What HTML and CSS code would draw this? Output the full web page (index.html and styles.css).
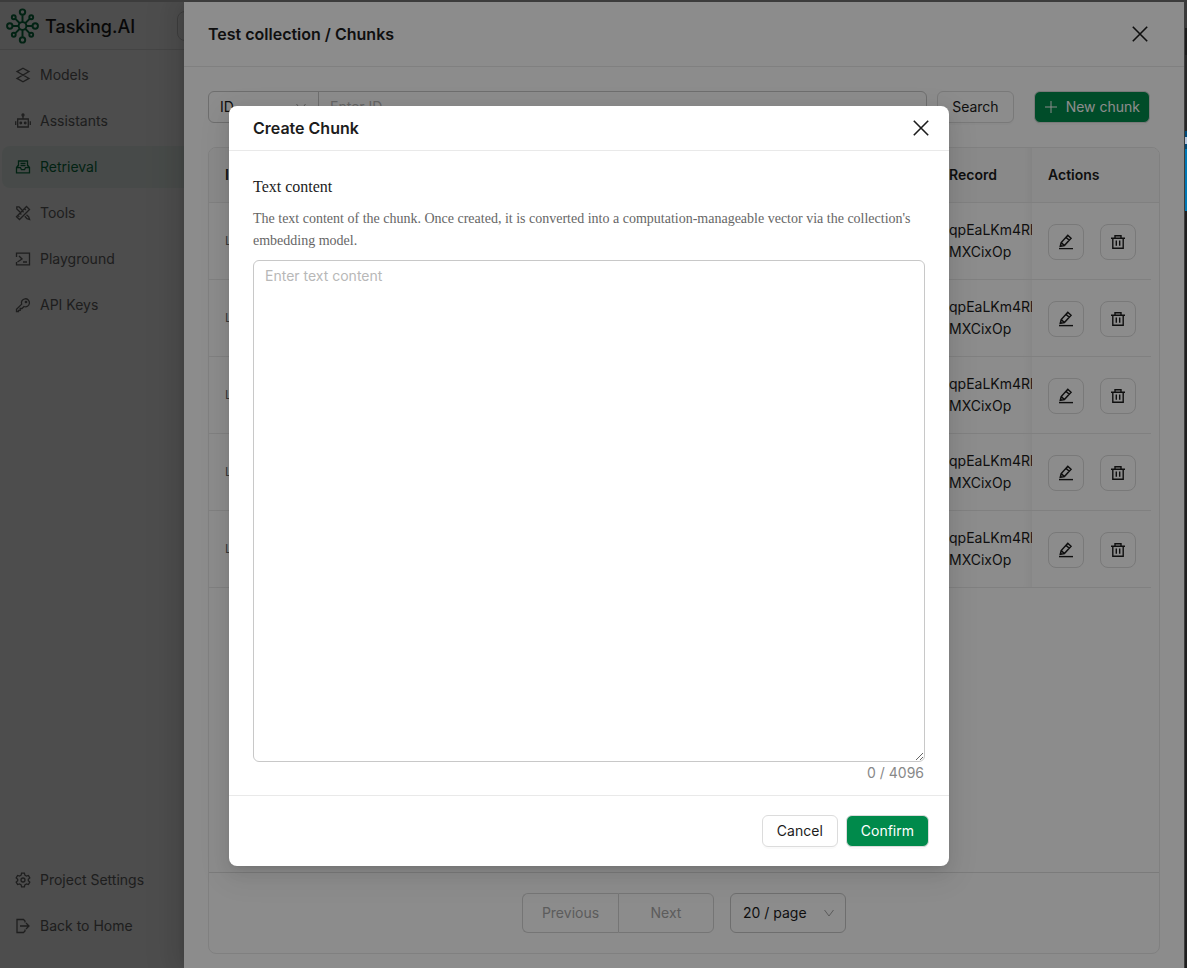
FILE: index.html
```html
<!DOCTYPE html>
<html lang="en">
<head>
<meta charset="utf-8">
<title>Tasking.AI</title>
<link rel="stylesheet" href="styles.css">
</head>
<body>
<svg class="sprite" aria-hidden="true">
  <symbol id="edit" viewBox="0 0 16 16"><path d="M1 14.600h14" stroke-width="1.400"/><path d="M2.300 12.300l.9-3.700 6.600-7.300 3.200 2.900-6.600 7.300z M3.200 8.600l3.200 2.900 M8 3.300l3.200 2.900" stroke-width="1.500"/></symbol>
  <symbol id="trash" viewBox="0 0 16 16"><path d="M1 4.200h14M2.800 4.200v10h10.400v-10M5 4V1.800h6V4M6.300 6.500v5.200M9.700 6.500v5.200" stroke-width="1.400"/></symbol>
  <symbol id="close" viewBox="0 0 16 16"><path d="M.8.8l14.400 14.400M15.200.8L.8 15.200" stroke-width="1.600"/></symbol>
  <symbol id="chevron" viewBox="0 0 12 12"><path d="M1.500 3L6 9l4.500-6"/></symbol>
</svg>
<div class="window">
  <div class="app">
    <header class="topbar">
      <svg class="logo" viewBox="0 0 34 36"><path d="M17 14V7M17 22v7M13 18H6M21 18h7M14.200 15.200l-4.500-4.500M19.800 15.200l4.500-4.500M14.200 20.800l-4.500 4.500M19.800 20.800l4.500 4.500"/><circle cx="17" cy="18" r="4"/><circle cx="17" cy="3.700" r="2.800"/><circle cx="17" cy="32.300" r="2.800"/><circle cx="3.900" cy="18" r="2.800"/><circle cx="30.100" cy="18" r="2.800"/><circle cx="8" cy="9" r="2"/><circle cx="26" cy="9" r="2"/><circle cx="8" cy="27" r="2"/><circle cx="26" cy="27" r="2"/></svg>
      <span class="brand">Tasking.AI</span>
      <span class="project"></span>
    </header>
    <nav class="sidebar">
      <a class="item" href="#"><svg viewBox="0 0 16 16"><path d="M8 1.200l6 3.400-6 3.400-6-3.400zM5 9.700l-3 1.700 6 3.400 6-3.400-3-1.700M2 4.600l0 .4 12 6.400M14 4.600l0 .4-12 6.400" stroke="none"/><path d="M8 1.200l6 3.400-6 3.400-6-3.400zM8 8l6 3.400-6 3.400-6-3.400z"/></svg>Models</a>
      <a class="item" href="#"><svg viewBox="0 0 16 16"><path d="M2.700 6h10.600v8H2.700zM8 6V3M.7 8.300v3.600M15.300 8.300v3.600"/><circle cx="8" cy="2" r="1"/><circle cx="5.800" cy="10" r=".8"/><circle cx="10.200" cy="10" r=".8"/></svg>Assistants</a>
      <a class="item active" href="#"><svg viewBox="0 0 16 16"><path d="M3.500 7.500V2h9v5.500M3.500 6L1.500 8.500v5.300h13V8.500L12.500 6M1.500 8.700h4l1 2h3l1-2h4M5.500 4.300h5M5.500 6.500h5"/></svg>Retrieval</a>
      <a class="item" href="#"><svg viewBox="0 0 16 16"><path d="M5 7L1.800 4V1.800H4L7 5M9.800 11.300l2.200 2.400 2.600.8-.9-2.600-2.200-2.200M1.500 11.700l10-10.200 3 3-10 10zM9.500 3.700l1.300 1.300M7.300 6l1.300 1.300M5.100 8.200l1.300 1.300M3 10.400l1.300 1.300"/></svg>Tools</a>
      <a class="item" href="#"><svg viewBox="0 0 16 16"><path d="M1.500 6V2.200h13v11.600h-13V11M4 5l3 3-4.500 3M8 11h4"/></svg>Playground</a>
      <a class="item" href="#"><svg viewBox="0 0 16 16"><path d="M6.700 7.200a4 4 0 1 1 2.300 2.300L7 11.500H5.200v1.800H3.500v1.200h-2v-2.300z"/><circle cx="11" cy="5" r=".7"/></svg>API Keys</a>
      <span class="spacer"></span>
      <a class="item" href="#"><svg viewBox="0 0 16 16"><path d="M6.600 1.200h2.800l.5 2 1.500.9 2-.6 1.400 2.400-1.500 1.400v1.400l1.500 1.400-1.400 2.400-2-.6-1.500.9-.5 2H6.600l-.5-2-1.500-.9-2 .6-1.400-2.400 1.500-1.400V7.300L1.200 5.900l1.400-2.400 2 .6 1.500-.9z"/><circle cx="8" cy="8" r="2"/></svg>Project Settings</a>
      <a class="item" href="#"><svg viewBox="0 0 16 16"><path d="M10 4.500V3L8.500 1.500H2v13h6.500L10 13v-1.500M5 8h9M11 5l3 3-3 3"/></svg>Back to Home</a>
    </nav>
  </div>
  <div class="mask"></div>

  <section class="drawer">
    <header class="drawer-head">
      <h2>Test collection / Chunks</h2>
      <button class="close" aria-label="Close drawer"><svg><use href="#close"/></svg></button>
    </header>
    <div class="drawer-body">
      <form class="filters">
        <div class="search">
          <button type="button" class="field" aria-label="Search field">ID<svg class="chev"><use href="#chevron"/></svg></button>
          <input type="text" placeholder="Enter ID" aria-label="ID">
        </div>
        <button type="button" class="btn">Search</button>
        <button type="button" class="btn primary new"><svg viewBox="0 0 14 14"><path d="M7 1v12M1 7h12"/></svg>New chunk</button>
      </form>
      <div class="panel">
        <table>
          <thead><tr><th class="id">ID</th><th class="rec">Record</th><th class="act">Actions</th></tr></thead>
          <tbody>
            <tr><td class="id">Lm</td><td class="rec"><div>qpEaLKm4Rh<br>MXCixOp</div></td><td class="act"><button aria-label="Edit"><svg><use href="#edit"/></svg></button><button aria-label="Delete"><svg><use href="#trash"/></svg></button></td></tr>
            <tr><td class="id">Lm</td><td class="rec"><div>qpEaLKm4Rh<br>MXCixOp</div></td><td class="act"><button aria-label="Edit"><svg><use href="#edit"/></svg></button><button aria-label="Delete"><svg><use href="#trash"/></svg></button></td></tr>
            <tr><td class="id">Lm</td><td class="rec"><div>qpEaLKm4Rh<br>MXCixOp</div></td><td class="act"><button aria-label="Edit"><svg><use href="#edit"/></svg></button><button aria-label="Delete"><svg><use href="#trash"/></svg></button></td></tr>
            <tr><td class="id">Lm</td><td class="rec"><div>qpEaLKm4Rh<br>MXCixOp</div></td><td class="act"><button aria-label="Edit"><svg><use href="#edit"/></svg></button><button aria-label="Delete"><svg><use href="#trash"/></svg></button></td></tr>
            <tr><td class="id">Lm</td><td class="rec"><div>qpEaLKm4Rh<br>MXCixOp</div></td><td class="act"><button aria-label="Edit"><svg><use href="#edit"/></svg></button><button aria-label="Delete"><svg><use href="#trash"/></svg></button></td></tr>
          </tbody>
        </table>
        <footer class="pager">
          <div class="pages"><button disabled>Previous</button><button disabled>Next</button></div>
          <div class="size">
            <select aria-label="Page size"><option>20 / page</option></select>
            <svg class="chev"><use href="#chevron"/></svg>
          </div>
        </footer>
      </div>
    </div>
  </section>

  <div class="mask dialog-layer">
    <section class="modal" role="dialog" aria-labelledby="modal-title">
      <header class="modal-head">
        <h2 id="modal-title">Create Chunk</h2>
        <button class="close" aria-label="Close dialog"><svg><use href="#close"/></svg></button>
      </header>
      <div class="modal-body">
        <label for="content">Text content</label>
        <p>The text content of the chunk. Once created, it is converted into a computation-manageable vector via the collection's embedding model.</p>
        <textarea id="content" placeholder="Enter text content"></textarea>
        <span class="count">0 / 4096</span>
      </div>
      <footer class="modal-foot">
        <button class="btn">Cancel</button>
        <button class="btn primary">Confirm</button>
      </footer>
    </section>
  </div>
</div>
</body>
</html>
```
FILE: styles.css
```css
* { box-sizing: border-box; }
body {
  margin: 0;
  background: linear-gradient(
    #3a3a3a 28px, #1c1c1c 28px 55px, #262626 55px 131px,
    #004a78 131px 137px, #b4c6dc 137px 144px, #004a78 144px 149px,
    #0078b4 149px 211px, #1e1e1e 211px) no-repeat #1e1e1e;
  font: 14px/22px Inter, "Liberation Sans", sans-serif;
  color: #1c1c1c;
}
h2, p { margin: 0; }
button, input, select, textarea { font: inherit; color: inherit; margin: 0; }
button { cursor: pointer; }
svg { fill: none; stroke: currentColor; flex: none; }
.sprite { position: absolute; width: 0; height: 0; }

.window {
  position: relative;
  height: 100vh;
  margin-right: 2px;
  overflow: hidden;
  border-top: 2px solid #3c3c3c;
  border-right: 1px solid #3c3c3c;
}
.app { height: 100%; background: #fff; display: flex; flex-direction: column; }
.mask { position: absolute; inset: 0; background: rgba(0, 0, 0, .45); }

.topbar {
  display: flex;
  align-items: center;
  height: 48px;
  padding-left: 6px;
  border-bottom: 1px solid #e4e4e4;
}
.logo { width: 33px; height: 36px; stroke: #087443; stroke-width: 2; }
.brand { width: 132px; padding: 2px 0 0 6px; font-size: 18px; font-weight: 500; }
.project { margin-left: 6px; width: 200px; height: 30px; border: 1px solid #d0d0d0; border-radius: 8px; }

.sidebar { flex: 1; width: 240px; padding: 4px 0 21px 2px; display: flex; flex-direction: column; gap: 4px; }
.item {
  display: flex;
  align-items: center;
  gap: 9px;
  height: 42px;
  padding-left: 13px;
  border-radius: 8px;
  color: #666;
  text-decoration: none;
}
.item svg { width: 16px; height: 16px; stroke-width: 1.3; }
.item.active { background: #edf8f3; color: #087443; }
.spacer { flex: 1; }

.drawer {
  position: absolute;
  inset: 0 0 0 184px;
  background: #fff;
  display: flex;
  flex-direction: column;
  box-shadow: -6px 0 16px rgba(0, 0, 0, .08), -3px 0 6px -4px rgba(0, 0, 0, .12), -9px 0 28px 8px rgba(0, 0, 0, .05);
}
.drawer-head {
  display: flex;
  align-items: center;
  justify-content: space-between;
  height: 65px;
  padding: 0 36px 0 24px;
  border-bottom: 1px solid #e9e9e9;
}
h2 { font-size: 16px; line-height: 24px; font-weight: 600; }
.close { display: flex; padding: 0; border: 0; background: none; }
.close svg { width: 16px; height: 16px; }
.drawer-body { flex: 1; display: flex; flex-direction: column; gap: 24px; padding: 24px 24px 14px; }

.filters { display: flex; padding-right: 10px; }
.search {
  flex: 1;
  display: flex;
  height: 32px;
  margin-right: 10px;
  border: 1px solid #c8c8c8;
  border-radius: 6px;
}
.field {
  display: flex;
  align-items: center;
  justify-content: space-between;
  width: 110px;
  padding: 0 11px;
  border: 0;
  border-right: 1px solid #c8c8c8;
  background: none;
}
.chev { width: 12px; height: 12px; color: #a6a6a6; }
.search input { flex: 1; min-width: 0; border: 0; background: none; padding: 0 11px; }
::placeholder { color: #b8b8b8; opacity: 1; }
.btn {
  height: 32px;
  padding: 0 14px;
  border: 1px solid #dcdcdc;
  border-radius: 6px;
  background: #fff;
  box-shadow: 0 2px 0 rgba(0, 0, 0, .02);
}
.btn.primary { background: #008a4b; color: #fff; }
.btn.new { display: flex; align-items: center; gap: 8px; margin-left: 20px; padding: 0 9px; }
.new svg { width: 14px; height: 14px; }

.panel {
  flex: 1;
  display: flex;
  flex-direction: column;
  border: 1px solid #e9e9e9;
  border-radius: 8px;
  overflow: hidden;
}
table { border-collapse: separate; border-spacing: 0; table-layout: fixed; width: 100%; }
th, td { padding: 0; text-align: left; border-bottom: 1px solid #e9e9e9; }
th { height: 55px; background: #fafafa; font-weight: 600; }
td { height: 77px; }
th.id, td.id { padding-left: 16px; }
td.id { color: #666; font-size: 12px; }
.rec { width: 83px; overflow: hidden; box-shadow: inset -10px 0 8px -8px rgba(5, 5, 5, .06); }
.rec div { white-space: nowrap; overflow: hidden; }
.act { width: 127px; padding-left: 16px; }
td.act {
  border-bottom: 0;
  background: linear-gradient(#e9e9e9, #e9e9e9) left bottom / calc(100% - 8px) 1px no-repeat;
}
td.act button {
  display: inline-flex;
  align-items: center;
  justify-content: center;
  width: 36px;
  height: 36px;
  margin-right: 16px;
  padding: 0;
  vertical-align: middle;
  border: 1px solid #dcdcdc;
  border-radius: 8px;
  background: none;
}
td.act button:last-child { margin-right: 0; }
td.act svg { width: 16px; height: 16px; }
.pager {
  margin-top: auto;
  height: 81px;
  border-top: 1px solid #e0e0e0;
  display: flex;
  justify-content: center;
  align-items: center;
  gap: 16px;
}
.pages { display: flex; }
.pages button { width: 96px; height: 40px; padding: 0; border: 1px solid #d5d5d5; background: none; color: #a8a8a8; }
.pages button:first-child { border-right: 0; border-radius: 6px 0 0 6px; }
.pages button:last-child { border-radius: 0 6px 6px 0; }
.size { position: relative; }
.size select {
  appearance: none;
  width: 116px;
  height: 40px;
  padding: 0 12px;
  border: 1px solid #c8c8c8;
  border-radius: 6px;
  background: none;
}
.size .chev { position: absolute; right: 11px; top: 14px; pointer-events: none; }

.dialog-layer { display: flex; justify-content: center; align-items: flex-start; padding: 104px 6px 102px 0; }
.modal {
  width: 720px;
  max-width: 100%;
  height: 100%;
  display: flex;
  flex-direction: column;
  background: #fff;
  border-radius: 8px;
  box-shadow: 0 6px 16px rgba(0, 0, 0, .08), 0 3px 6px -4px rgba(0, 0, 0, .12), 0 9px 28px 8px rgba(0, 0, 0, .05);
}
.modal-head {
  display: flex;
  align-items: center;
  justify-content: space-between;
  height: 45px;
  padding: 0 20px 0 24px;
  border-bottom: 1px solid #e9e9e9;
}
.modal-body { flex: 1; display: flex; flex-direction: column; padding: 24px 24px 11px; font-family: "Liberation Serif", serif; }
.modal-body label { font-size: 16px; line-height: 24px; }
.modal-body p { margin: 9px 0 8px; color: #666; }
textarea {
  flex: 1;
  width: 100%;
  padding: 4px 11px;
  border: 1px solid #c8c8c8;
  border-radius: 6px;
  font-family: Inter, "Liberation Sans", sans-serif;
  resize: vertical;
}
.count { align-self: flex-end; margin-right: 1px; color: #888; font-family: Inter, "Liberation Sans", sans-serif; }
.modal-foot {
  display: flex;
  justify-content: flex-end;
  gap: 8px;
  padding: 19px 20px;
  border-top: 1px solid #e9e9e9;
}
```
